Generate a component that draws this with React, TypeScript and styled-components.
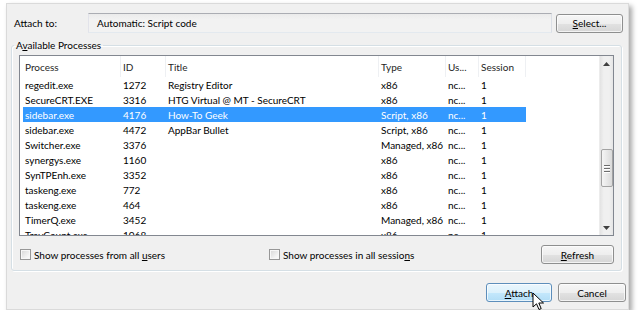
import React from 'react'
import styled, { createGlobalStyle, css } from 'styled-components'

const GlobalStyle = createGlobalStyle`
  html, body {
    margin: 0;
    padding: 0;
    background: #ffffff;
  }
  body {
    font-family: Lato, 'Open Sans', 'Liberation Sans', sans-serif;
    font-size: 10px;
    color: #000;
  }
`

interface IProcess {
  name: string
  id: string
  title: string
  type: string
  user: string
  session: string
  selected?: boolean
}

const processes: IProcess[] = [
  { name: 'regedit.exe', id: '1272', title: 'Registry Editor', type: 'x86', user: 'nc...', session: '1' },
  { name: 'SecureCRT.EXE', id: '3316', title: 'HTG Virtual @ MT - SecureCRT', type: 'x86', user: 'nc...', session: '1' },
  { name: 'sidebar.exe', id: '4176', title: 'How-To Geek', type: 'Script, x86', user: 'nc...', session: '1', selected: true },
  { name: 'sidebar.exe', id: '4472', title: 'AppBar Bullet', type: 'Script, x86', user: 'nc...', session: '1' },
  { name: 'Switcher.exe', id: '3376', title: '', type: 'Managed, x86', user: 'nc...', session: '1' },
  { name: 'synergys.exe', id: '1160', title: '', type: 'x86', user: 'nc...', session: '1' },
  { name: 'SynTPEnh.exe', id: '3352', title: '', type: 'x86', user: 'nc...', session: '1' },
  { name: 'taskeng.exe', id: '772', title: '', type: 'x86', user: 'nc...', session: '1' },
  { name: 'taskeng.exe', id: '464', title: '', type: 'x86', user: 'nc...', session: '1' },
  { name: 'TimerQ.exe', id: '3452', title: '', type: 'Managed, x86', user: 'nc...', session: '1' },
  { name: 'TrayCount.exe', id: '1068', title: '', type: 'x86', user: 'nc...', session: '1' },
]

const columns: { key: keyof IProcess; label: string; width: number }[] = [
  { key: 'name', label: 'Process', width: 98 },
  { key: 'id', label: 'ID', width: 45 },
  { key: 'title', label: 'Title', width: 213 },
  { key: 'type', label: 'Type', width: 67 },
  { key: 'user', label: 'Us...', width: 33 },
  { key: 'session', label: 'Session', width: 47 },
]

export default function App() {
  return (
    <>
      <GlobalStyle />
      <Page>
        <Dialog>
          <TopRow>
            <FieldLabel>Attach to:</FieldLabel>
            <ReadOnlyBox>Automatic: Script code</ReadOnlyBox>
            <Button $width={67}>
              <span>
                <u>S</u>elect...
              </span>
            </Button>
          </TopRow>
          <GroupBox>
            <GroupLegend>
              A<u>v</u>ailable Processes
            </GroupLegend>
            <ProcessList />
            <OptionsRow>
              <CheckOption $width={248}>
                <CheckBox />
                <span>
                  Show processes from all <u>u</u>sers
                </span>
              </CheckOption>
              <CheckOption $width={260}>
                <CheckBox />
                <span>
                  Show processes in all sessio<u>n</u>s
                </span>
              </CheckOption>
              <Spacer />
              <Button $width={73}>
                <span>
                  <u>R</u>efresh
                </span>
              </Button>
            </OptionsRow>
          </GroupBox>
          <ButtonRow>
            <Button $width={66} $hover>
              <span>
                <u>A</u>ttach
              </span>
            </Button>
            <Button $width={68}>Cancel</Button>
          </ButtonRow>
          <Cursor />
        </Dialog>
      </Page>
    </>
  )
}

const ProcessList = () => {
  return (
    <ListView>
      <ListBody>
        <HeaderRow>
          {columns.map((col) => (
            <HeaderCell key={col.key} $width={col.width}>
              {col.label}
            </HeaderCell>
          ))}
          <HeaderFiller />
        </HeaderRow>
        {processes.map((p, index) => (
          <Row key={index} $selected={!!p.selected}>
            {columns.map((col) => (
              <Cell key={col.key} $width={col.width}>
                {p[col.key]}
              </Cell>
            ))}
          </Row>
        ))}
      </ListBody>
      <ScrollBar>
        <ScrollArrow>
          <svg width="7" height="4" viewBox="0 0 7 4">
            <path d="M0 4 L3.5 0 L7 4 Z" fill="#404040" />
          </svg>
        </ScrollArrow>
        <ScrollTrack>
          <Thumb>
            <Grip />
            <Grip />
            <Grip />
          </Thumb>
        </ScrollTrack>
        <ScrollArrow>
          <svg width="7" height="4" viewBox="0 0 7 4">
            <path d="M0 0 L7 0 L3.5 4 Z" fill="#404040" />
          </svg>
        </ScrollArrow>
      </ScrollBar>
    </ListView>
  )
}

const Cursor = () => (
  <CursorWrap>
    <svg width="13" height="20" viewBox="0 0 13 20">
      <path
        d="M1 1 L1 15 L4.5 11.8 L7 17.5 L9.2 16.6 L6.8 11 L11.5 11 Z"
        fill="#fff"
        stroke="#000"
        strokeWidth="1"
        strokeLinejoin="round"
      />
    </svg>
  </CursorWrap>
)

const Page = styled.div`
  padding: 3px 0 0 6px;
`
const Dialog = styled.div`
  position: relative;
  width: 623px;
  height: 307px;
  box-sizing: border-box;
  background: #f0f0f0;
  border: 1px solid #dadada;
  box-shadow: 3px 3px 5px rgba(0, 0, 0, 0.35);
  display: flex;
  flex-direction: column;
`
const TopRow = styled.div`
  display: flex;
  align-items: center;
  height: 20px;
  margin-top: 9px;
  padding-left: 7px;
`
const FieldLabel = styled.div`
  width: 74px;
`
const ReadOnlyBox = styled.div`
  width: 464px;
  height: 20px;
  box-sizing: border-box;
  margin-right: 4px;
  padding-left: 8px;
  display: flex;
  align-items: center;
  background: linear-gradient(#ebebeb, #f2f2f2 30%, #f2f2f2);
  border: 1px solid;
  border-color: #abadb3 #dbdfe6 #e3e9ef #e2e3ea;
`
const Button = styled.div<{ $width: number; $hover?: boolean }>`
  width: ${(p) => p.$width}px;
  height: 19px;
  box-sizing: border-box;
  display: flex;
  align-items: center;
  justify-content: center;
  border: 1px solid #8e8f8f;
  border-radius: 3px;
  color: #000;
  background: linear-gradient(#f6f6f6 0%, #eeeeee 50%, #e2e2e2 51%, #d6d6d6 100%);
  box-shadow: inset 0 0 0 1px rgba(255, 255, 255, 0.7);
  ${(p) =>
    p.$hover &&
    css`
      border-color: #5d8ebb;
      background: linear-gradient(#eaf6fd 0%, #dcf1fc 50%, #c4e8fc 51%, #b2ddf6 100%);
    `}
`
const GroupBox = styled.fieldset`
  margin: 6px 6px 0 4px;
  padding: 4px 7px 6px 7px;
  border: 1px solid #d5dfe5;
  border-radius: 3px;
  box-shadow: inset 1px 1px 0 #fff, 1px 1px 0 #fff;
  display: flex;
  flex-direction: column;
`
const GroupLegend = styled.legend`
  padding: 0 2px;
  margin-left: -5px;
  line-height: 12px;
  color: #000;
`
const ListView = styled.div`
  height: 181px;
  box-sizing: border-box;
  border: 1px solid #828790;
  background: #fff;
  display: flex;
  overflow: hidden;
`
const ListBody = styled.div`
  flex: 1;
  overflow: hidden;
  padding-left: 3px;
`
const HeaderRow = styled.div`
  display: flex;
  height: 21px;
  align-items: stretch;
  color: #1f1f1f;
`
const HeaderCell = styled.div<{ $width: number }>`
  width: ${(p) => p.$width}px;
  box-sizing: border-box;
  padding-left: 2px;
  display: flex;
  align-items: center;
  border-right: 1px solid #eef0f3;
  white-space: nowrap;
`
const HeaderFiller = styled.div`
  flex: 1;
`
const Row = styled.div<{ $selected: boolean }>`
  display: flex;
  width: 503px;
  height: 15px;
  align-items: center;
  white-space: nowrap;
  ${(p) =>
    p.$selected &&
    css`
      background: #3399ff;
      color: #fff;
    `}
`
const Cell = styled.div<{ $width: number }>`
  width: ${(p) => p.$width}px;
  padding-left: 2px;
  box-sizing: border-box;
  overflow: hidden;
`
const ScrollBar = styled.div`
  width: 13px;
  display: flex;
  flex-direction: column;
  background: linear-gradient(90deg, #e3e3e3, #f0f0f0 30%, #f0f0f0 70%, #e6e6e6);
  border-left: 1px solid #ececec;
`
const ScrollArrow = styled.div`
  height: 15px;
  display: flex;
  align-items: center;
  justify-content: center;
`
const ScrollTrack = styled.div`
  flex: 1;
  display: flex;
  flex-direction: column;
  align-items: center;
`
const Thumb = styled.div`
  margin-top: 78px;
  width: 12px;
  height: 38px;
  box-sizing: border-box;
  border: 1px solid #a3a3a3;
  border-radius: 2px;
  background: linear-gradient(90deg, #f5f5f5, #e8e8e8 50%, #dadada);
  display: flex;
  flex-direction: column;
  align-items: center;
  justify-content: center;
  gap: 2px;
`
const Grip = styled.div`
  width: 6px;
  height: 1px;
  background: #6d6d6d;
  box-shadow: 0 1px 0 #fff;
`
const OptionsRow = styled.div`
  display: flex;
  align-items: center;
  height: 19px;
  margin-top: 9px;
`
const CheckOption = styled.div<{ $width: number }>`
  width: ${(p) => p.$width}px;
  display: flex;
  align-items: center;
  gap: 3px;
  padding-left: 1px;
`
const CheckBox = styled.div`
  width: 11px;
  height: 11px;
  box-sizing: border-box;
  border: 1px solid #979797;
  background: linear-gradient(135deg, #d6d6d6, #f4f4f4 70%, #fdfdfd);
  box-shadow: inset 0 0 0 1px #f7f7f7;
`
const Spacer = styled.div`
  flex: 1;
`
const ButtonRow = styled.div`
  display: flex;
  justify-content: flex-end;
  gap: 6px;
  margin-top: 12px;
  padding-right: 2px;
`
const CursorWrap = styled.div`
  position: absolute;
  left: 525px;
  top: 288px;
  width: 13px;
  height: 20px;
  pointer-events: none;
`
